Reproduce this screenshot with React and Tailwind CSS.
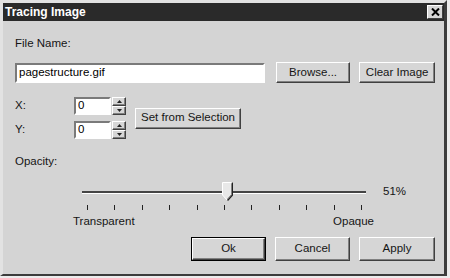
import React from "react";

const font = { fontFamily: "'Liberation Sans', Arial, sans-serif" };

const raised =
  "border border-t-white border-l-white border-b-[#404040] border-r-[#404040] shadow-[inset_-1px_-1px_0_#808080] bg-[#d6d6d6]";
const sunken =
  "border-2 border-t-[#7a7a7a] border-l-[#7a7a7a] border-b-white border-r-white bg-white";

function Button({ children, className = "", isDefault = false }) {
  if (isDefault) {
    return (
      <div className={`border border-black ${className}`}>
        <div className={`${raised} w-full h-full flex items-center justify-center text-[11.5px] text-[#151515]`}>
          {children}
        </div>
      </div>
    );
  }
  return (
    <div className={`${raised} flex items-center justify-center text-[11.5px] text-[#151515] ${className}`}>
      {children}
    </div>
  );
}

function Spinner() {
  return (
    <div className="flex items-center">
      <div className={`${sunken} w-[37px] h-[18px] flex items-center pl-[2px] text-[11.5px] text-black`}>0</div>
      <div className="flex flex-col ml-[1px]">
        <div className={`${raised} w-[14px] h-[9px] flex items-center justify-center`}>
          <svg width="5" height="3" viewBox="0 0 5 3"><path d="M2.5 0L5 3H0z" fill="#222" /></svg>
        </div>
        <div className={`${raised} w-[14px] h-[9px] flex items-center justify-center`}>
          <svg width="5" height="3" viewBox="0 0 5 3"><path d="M0 0H5L2.5 3z" fill="#222" /></svg>
        </div>
      </div>
    </div>
  );
}

export default function App() {
  const ticks = Array.from({ length: 11 });
  return (
    <div className="w-[450px] h-[278px] bg-[#ececec] overflow-hidden" style={font}>
      <div className="w-[447px] h-[276px] bg-[#d4d4d4] border-t-[3px] border-l-[3px] border-r-[3px] border-b-[2px] border-t-[#e2e2e2] border-l-[#e2e2e2] border-r-[#3c3c3c] border-b-[#3c3c3c] flex flex-col">
        {/* title bar */}
        <div className="h-[18px] bg-[#2a2a2a] flex items-center justify-between pl-[2px] pr-[1px]">
          <span className="text-white font-bold text-[12px] leading-none">Tracing Image</span>
          <div className="w-[16px] h-[14px] bg-[#d6d6d6] border border-t-white border-l-white border-b-[#404040] border-r-[#404040] flex items-center justify-center">
            <svg width="9" height="8" viewBox="0 0 9 8">
              <path d="M1 0.5L8 7.5M8 0.5L1 7.5" stroke="#000" strokeWidth="2" />
            </svg>
          </div>
        </div>

        <div className="flex flex-col pl-[12px] pr-[9px]">
          <div className="mt-[15px] h-[14px] leading-[14px] text-[11.5px] text-[#151515]">File Name:</div>

          <div className="mt-[12px] flex items-center">
            <div className={`${sunken} w-[251px] h-[20px] flex items-center pl-[2px] text-[11.5px] text-black`}>
              pagestructure.gif
            </div>
            <Button className="ml-[11px] w-[75px] h-[21px]">Browse...</Button>
            <Button className="ml-[9px] w-[76px] h-[21px]">Clear Image</Button>
          </div>

          <div className="mt-[14px] flex items-center">
            <div className="flex flex-col gap-[6px]">
              <div className="flex items-center">
                <span className="w-[59px] text-[11.5px] text-[#151515]">X:</span>
                <Spinner />
              </div>
              <div className="flex items-center">
                <span className="w-[59px] text-[11.5px] text-[#151515]">Y:</span>
                <Spinner />
              </div>
            </div>
            <Button className="ml-[9px] w-[106px] h-[21px]">Set from Selection</Button>
          </div>

          <div className="mt-[15px] h-[14px] leading-[14px] text-[11.5px] text-[#151515]">Opacity:</div>

          {/* slider */}
          <div className="mt-[14px] flex items-center">
            <div className="ml-[67px] relative w-[284px] h-[20px] flex items-center">
              <div className="w-full h-[3px] border-t-[2px] border-t-[#444] border-b border-b-white" />
              <svg className="absolute left-[140px] top-[0px]" width="11" height="19" viewBox="0 0 11 19">
                <path d="M0.5 0.5H10.5V13L5.5 18.5L0.5 13Z" fill="#e8e8e8" stroke="#fff" />
                <path d="M10.5 0.5V13L5.5 18.5" fill="none" stroke="#222" strokeWidth="1.5" />
                <path d="M9.5 1.5V12.5L5.5 17" fill="none" stroke="#808080" />
              </svg>
            </div>
            <span className="ml-[17px] text-[11.5px] text-[#151515]">51%</span>
          </div>

          <div className="mt-[3px] ml-[72px] w-[275px] flex justify-between">
            {ticks.map((_, i) => (
              <div key={i} className="w-[1px] h-[5px] bg-[#222]" />
            ))}
          </div>

          <div className="mt-[4px] ml-[58px] w-[301px] flex justify-between text-[11.5px] text-[#151515] leading-[14px]">
            <span>Transparent</span>
            <span>Opaque</span>
          </div>

          <div className="mt-[9px] flex justify-end gap-[9px]">
            <Button isDefault className="w-[75px] h-[24px]">Ok</Button>
            <Button className="w-[75px] h-[24px]">Cancel</Button>
            <Button className="w-[76px] h-[24px]">Apply</Button>
          </div>
        </div>
      </div>
    </div>
  );
}
